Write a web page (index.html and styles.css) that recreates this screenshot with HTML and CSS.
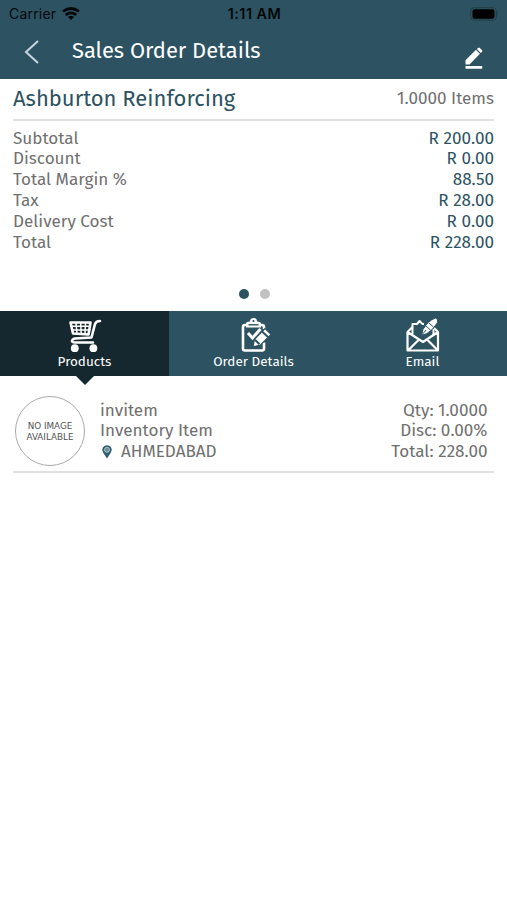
FILE: index.html
```html
<!DOCTYPE html>
<html lang="en">
<head>
<meta charset="utf-8">
<title>Sales Order Details</title>
<link rel="stylesheet" href="styles.css">
</head>
<body>
<header>
  <div class="status">
    <div class="carrier"><span>Carrier</span>
      <svg width="18" height="14" viewBox="0 0 18 14" fill="none" stroke="#030708"><path d="M1 4.500Q9-1.500 17 4.500" stroke-width="2.800"/><path d="M3.700 8Q9 3.700 14.300 8" stroke-width="2.600"/><path d="M9 13L6 10Q9 7.600 12 10Z" fill="#030708" stroke="none"/></svg>
    </div>
    <span class="clock">1:11 AM</span>
    <svg class="battery" width="30" height="14" viewBox="0 0 30 14"><rect x=".6" y=".6" width="25.800" height="12.600" rx="4" fill="none" stroke="#234149" stroke-width="1.200"/><rect x="2.500" y="2.300" width="22" height="9.400" rx="2.200" fill="#000"/><path d="M27.500 4.700q1.800 2.200 0 4.600z" fill="#234149"/></svg>
  </div>
  <div class="titlebar">
    <svg class="back" width="16" height="26" viewBox="0 0 16 26" fill="none" stroke="#c8d6dd" stroke-width="2"><path d="M14 2L2 13L14 24"/></svg>
    <h1>Sales Order Details</h1>
    <svg class="edit" width="18" height="22" viewBox="0 0 18 22" fill="#fff"><path d="M.5 17.500V13.200L11 2.700l4 4L4.500 17.500zM11.900 1.900l1-1q1-.9 2 0l2 2q.9 1 0 2L15.900 5.900zM.5 19h16.700v2.800H.5z"/></svg>
  </div>
</header>
<main>
  <section class="summary">
    <div class="customer"><h2>Ashburton Reinforcing</h2><span class="count">1.0000 Items</span></div>
    <dl class="totals">
      <div><dt>Subtotal</dt><dd>R 200.00</dd></div>
      <div><dt>Discount</dt><dd>R 0.00</dd></div>
      <div><dt>Total Margin %</dt><dd>88.50</dd></div>
      <div><dt>Tax</dt><dd>R 28.00</dd></div>
      <div><dt>Delivery Cost</dt><dd>R 0.00</dd></div>
      <div><dt>Total</dt><dd>R 228.00</dd></div>
    </dl>
    <div class="dots"><i class="on"></i><i></i></div>
  </section>
  <nav>
    <div class="tab active">
      <svg width="34" height="36" viewBox="0 0 34 36" fill="none" stroke="#fff" stroke-width="2" stroke-linecap="round" stroke-linejoin="round"><path d="M2.500 4.500H22.500L20.500 16.500L5 15.500Z" stroke-width="2.600"/><path d="M8 5l1 11M12.700 5l.5 11M17.500 5l-.5 11M3 8.300h19M4 12h18" stroke-width="1.500"/><path d="M32 3Q28 3 27 6L23.500 19.500L7 20.500Q4 21 4 23.500Q4.500 24.500 7 24.500H25" stroke-width="2.600"/><circle cx="6.800" cy="30.200" r="3.900" fill="#fff" stroke="none"/><circle cx="25.400" cy="30.200" r="3.900" fill="#fff" stroke="none"/></svg>
      <span>Products</span>
    </div>
    <div class="tab">
      <svg width="34" height="36" viewBox="0 0 34 36" fill="none" stroke="#fff" stroke-width="2"><path d="M10 7H8q-2 0-2 2v21.500q0 2 2 2h17q2 0 2-2v-6M23 7h2q2 0 2 2v2" stroke-width="2.600"/><path d="M9 9.500V5.500q0-2 4-2Q13 0 16.500 0T20 3.500Q24 3.500 24 5.500V9.500Z" fill="#fff" stroke="none"/><path d="M11.500 6.800h10" stroke="#2d5363" stroke-width="1.400"/><circle cx="16.500" cy="3" r="1.100" fill="#2d5363" stroke="none"/><path d="M11 15l4.500 5 8-9" stroke-width="3"/><path d="M16 28.800l1.400-7.500L28 10.500l6 5.800L23.500 27Z" fill="#fff" stroke="#2d5363" stroke-width="1.200"/><path d="M18 21.800l4.500 4.500M25 13.500l6 5.500" stroke="#2d5363"/></svg>
      <span>Order Details</span>
    </div>
    <div class="tab">
      <svg width="34" height="36" viewBox="0 0 34 36" fill="none" stroke="#fff" stroke-width="2" stroke-linejoin="round"><path d="M1.500 14V32.500H32V14L17 24ZM2 32.500l11-11M32 32.500L21 21.500M1.500 14l5-5M32 14l-4-4" stroke-width="2.200"/><path d="M6.500 16V6H11L13.500 3L16.500 6H18M27.500 11v6" stroke-width="2"/><path d="M15.500 17.500l1.500-6Q22 2.500 29.500 0Q32.500 1 31.500 4.500Q27 12 21 15.500z" fill="#fff" stroke="#2d5363" stroke-width="1"/><path d="M15.500 17.500L20 12M20 8l4.500 4M23 5l4.500 4" stroke="#2d5363" stroke-width="1"/></svg>
      <span>Email</span>
    </div>
  </nav>
  <article class="item">
    <div class="thumb">NO IMAGE<br>AVAILABLE</div>
    <div class="info">
      <div>invitem</div>
      <div>Inventory Item</div>
      <div class="place"><svg width="10" height="14" viewBox="0 0 10 14"><path d="M5 13.500L1.400 8Q-1.200 3.500 2.400 1Q5-.4 7.600 1Q11.200 3.500 8.600 8Z" fill="#315d70"/><circle cx="5" cy="4.800" r="2.500" fill="#6b8c9b" stroke="#d5e0e5" stroke-width=".7"/></svg><span>AHMEDABAD</span></div>
    </div>
    <div class="nums"><div>Qty: 1.0000</div><div>Disc: 0.00%</div><div>Total: 228.00</div></div>
  </article>
</main>
</body>
</html>
```
FILE: styles.css
```css
* { box-sizing: border-box; }
body { margin: 0; background: #fff; color: #707070; font-family: "Fira Sans", "Noto Sans", sans-serif; font-size: 17.1px; }
svg { display: block; flex: none; }
h1, h2, dl, dd { margin: 0; font-weight: 400; }
header { height: 79px; background: #2d5363; }
.status { height: 27px; padding: 0 7px 0 9px; display: grid; grid-template-columns: 1fr auto 1fr; align-items: center; font-family: Inter, sans-serif; font-size: 14px; color: #030708; }
.carrier { display: flex; align-items: center; gap: 6px; letter-spacing: .2px; }
.clock { font-weight: 600; font-size: 14.4px; letter-spacing: .5px; }
.battery { justify-self: end; }
.titlebar { height: 52px; display: flex; padding: 0 24px; }
.back { margin-top: 12px; }
h1 { margin-left: 32px; flex: 1; color: #fff; font-size: 21.9px; line-height: 49px; white-space: nowrap; }
.edit { margin-top: 20px; }
.summary { height: 232px; padding: 0 13px; }
.customer { height: 42px; display: flex; justify-content: space-between; border-bottom: 2px solid #e0e0e0; line-height: 39px; }
h2 { font-size: 22px; color: #2d5363; }
.totals { padding-top: 7.6px; }
.totals div { display: flex; justify-content: space-between; height: 20.8px; line-height: 20.8px; }
dd { color: #2d5363; }
.dots { display: flex; justify-content: center; gap: 11px; margin: 36px 0 0 1px; }
.dots i { width: 10px; height: 10px; border-radius: 50%; background: #c1c1c1; }
.dots .on { background: #2d5363; }
nav { height: 65px; display: grid; grid-template-columns: repeat(3, 1fr); background: #2d5363; }
.tab { position: relative; display: flex; flex-direction: column; align-items: center; padding-top: 7px; color: #fff; font-size: 13.5px; line-height: 16px; }
.tab.active { background: #16282f; }
.tab.active::after { content: ""; position: absolute; top: 65px; left: 76px; border: 9px solid transparent; border-top-color: #16282f; border-bottom: 0; }
.item { margin: 0 13px; height: 97px; border-bottom: 2px solid #e0e0e0; display: flex; line-height: 20.8px; }
.thumb { width: 70px; height: 70px; margin: 20px 0 0 2px; border: 1.500px solid #aaa; border-radius: 50%; font: 8.800px/11px "DejaVu Sans", sans-serif; color: #555; text-align: center; padding-top: 24px; white-space: nowrap; }
.info { margin: 24.5px 0 0 15px; flex: 1; }
.place { display: flex; align-items: center; }
.place svg { margin: 0 9px 0 2px; }
.nums { margin: 24.5px 6.500px 0 0; text-align: right; }
```
